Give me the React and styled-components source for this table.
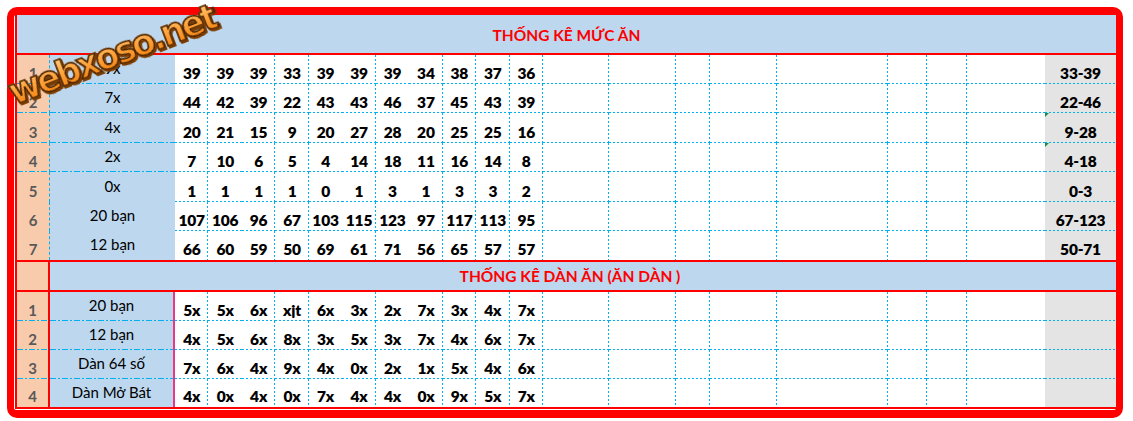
import React from "react";
import styled, { createGlobalStyle, css } from "styled-components";

const topRows = [
  { n: 1, label: "9x", values: ["39", "39", "39", "33", "39", "39", "39", "34", "38", "37", "36"], range: "33-39", sep: true },
  { n: 2, label: "7x", values: ["44", "42", "39", "22", "43", "43", "46", "37", "45", "43", "39"], range: "22-46", sep: true },
  { n: 3, label: "4x", values: ["20", "21", "15", "9", "20", "27", "28", "20", "25", "25", "16"], range: "9-28", sep: true, flag: true },
  { n: 4, label: "2x", values: ["7", "10", "6", "5", "4", "14", "18", "11", "16", "14", "8"], range: "4-18", sep: true, flag: true },
  { n: 5, label: "0x", values: ["1", "1", "1", "1", "0", "1", "3", "1", "3", "3", "2"], range: "0-3" },
  { n: 6, label: "20 bạn", values: ["107", "106", "96", "67", "103", "115", "123", "97", "117", "113", "95"], range: "67-123" },
  { n: 7, label: "12 bạn", values: ["66", "60", "59", "50", "69", "61", "71", "56", "65", "57", "57"], range: "50-71", last: true },
];

const bottomRows = [
  { n: 1, label: "20 bạn", values: ["5x", "5x", "6x", "xịt", "6x", "3x", "2x", "7x", "3x", "4x", "7x"] },
  { n: 2, label: "12 bạn", values: ["4x", "5x", "6x", "8x", "3x", "5x", "3x", "7x", "4x", "6x", "7x"] },
  { n: 3, label: "Dàn 64 số", values: ["7x", "6x", "4x", "9x", "4x", "0x", "2x", "1x", "5x", "4x", "6x"] },
  { n: 4, label: "Dàn Mở Bát", values: ["4x", "0x", "4x", "0x", "7x", "4x", "4x", "0x", "9x", "5x", "7x"], last: true },
];

// number columns without a grid line on their right edge
const noLine = [1, 4, 6];
// empty columns after the numbers; the last one has no line
const fillers = [0, 1, 2, 3, 4, 5, 6, 7];

const C = {
  red: "#ff0000",
  blue: "#bdd7ee",
  peach: "#f8cbad",
  gray: "#e4e4e4",
  dot: "#00b0f0",
  pink: "#e8388a",
};

const hDots = `repeating-linear-gradient(90deg, ${C.dot} 0 2px, transparent 2px 4px)`;
const vDots = `repeating-linear-gradient(180deg, ${C.dot} 0 2px, transparent 2px 4px)`;

// dotted grid lines drawn as backgrounds, like the sheet's hairlines
const gridLines = (p) => {
  const imgs = [];
  const sizes = [];
  const pos = [];
  if (p.$line) {
    imgs.push(vDots);
    sizes.push("1px 100%");
    pos.push("right top");
  }
  if (p.$bottom) {
    imgs.push(hDots);
    sizes.push("100% 1px");
    pos.push("left bottom");
  }
  if (!imgs.length) return "";
  return css`
    background-image: ${imgs.join(", ")};
    background-size: ${sizes.join(", ")};
    background-position: ${pos.join(", ")};
    background-repeat: no-repeat;
  `;
};

const dashDot = css`
  background-image: repeating-linear-gradient(
    90deg,
    ${C.dot} 0 6px,
    transparent 6px 8px,
    ${C.dot} 8px 10px,
    transparent 10px 12px
  );
  background-size: 100% 1px;
  background-position: left bottom;
  background-repeat: no-repeat;
`;

const GlobalStyle = createGlobalStyle`
  html, body { margin: 0; padding: 0; background: #fff; }
  body { font-family: Lato, "Liberation Sans", sans-serif; }
  * { box-sizing: border-box; }
`;

export default function App() {
  return (
    <>
      <GlobalStyle />
      <Frame>
        <Logo>webxoso.net</Logo>
        <Sheet>
          <Header>THỐNG KÊ MỨC ĂN</Header>

          {topRows.map((r) => (
            <React.Fragment key={"t" + r.n}>
              <RowNum $sep={r.sep}>{r.n}</RowNum>
              <Label $sep={r.sep}>{r.label}</Label>
              {r.values.map((v, i) => (
                <Num key={i} $line={!noLine.includes(i)} $bottom={!r.last}>{v}</Num>
              ))}
              {fillers.map((f) => (
                <Empty key={"f" + f} $line={f < 7} $bottom={!r.last} />
              ))}
              <Range $bottom={!r.last} $flag={r.flag}>{r.range}</Range>
            </React.Fragment>
          ))}

          <SubCorner />
          <SubHeader>THỐNG KÊ DÀN ĂN (ĂN DÀN )</SubHeader>

          {bottomRows.map((r) => (
            <React.Fragment key={"b" + r.n}>
              <RowNum $lower $sep={!r.last}>{r.n}</RowNum>
              <Label $lower $sep={!r.last}>{r.label}</Label>
              {r.values.map((v, i) => (
                <Num key={i} $line={!noLine.includes(i)} $bottom={!r.last}>{v}</Num>
              ))}
              {fillers.map((f) => (
                <Empty key={"f" + f} $line={f < 7} $bottom={!r.last} />
              ))}
              <Range $bottom={!r.last} />
            </React.Fragment>
          ))}
        </Sheet>
      </Frame>
    </>
  );
}

const Frame = styled.div`
  position: relative;
  margin: 7px 0 0 7px;
  width: 1116px;
  border-style: solid;
  border-color: ${C.red};
  border-width: 8px 7px 8px 7px;
  border-radius: 10px;
  padding: 0 0 1px 1px;
  background: #fff;
`;

const Sheet = styled.div`
  display: grid;
  grid-template-columns: 33px 125px repeat(11, 33.4545px) 66px 67px 34px 67px 111px 39px 40px 78px 71px;
  grid-template-rows: 40px 29px 29px 30px 29px 30px 29px 29px 32px 29px 29px 29px 28px;
  border-left: 2px solid ${C.red};
  border-bottom: 2px solid ${C.red};
  color: #000;
`;

const Header = styled.div`
  grid-column: 1 / -1;
  display: flex;
  align-items: center;
  justify-content: center;
  padding-top: 2px;
  background: ${C.blue};
  border-bottom: 2px solid ${C.red};
  color: ${C.red};
  font-weight: 700;
  font-size: 15.5px;
`;

const SubCorner = styled.div`
  background: ${C.peach};
  border-top: 2px solid ${C.red};
  border-bottom: 2px solid ${C.red};
  border-right: 2px solid ${C.red};
`;

const SubHeader = styled(Header)`
  grid-column: 2 / -1;
  border-top: 2px solid ${C.red};
  padding: 0 26px 0 0;
`;

const RowNum = styled.div`
  display: flex;
  align-items: flex-end;
  justify-content: center;
  padding-bottom: 3px;
  background-color: ${C.peach};
  color: #595959;
  font-weight: 700;
  font-size: 15px;
  line-height: 1;
  border-right: ${(p) => (p.$lower ? `2px solid ${C.red}` : `1px dashed ${C.dot}`)};
  ${(p) => p.$sep && dashDot}
`;

const Label = styled.div`
  display: flex;
  align-items: center;
  justify-content: center;
  padding-bottom: 2px;
  background-color: ${C.blue};
  font-size: 15px;
  line-height: 1;
  border-right: ${(p) => (p.$lower ? `2px solid ${C.pink}` : "none")};
  ${(p) => p.$sep && dashDot}
`;

const Num = styled.div`
  display: flex;
  align-items: flex-end;
  justify-content: center;
  padding-bottom: 3px;
  font-weight: 800;
  font-size: 15.5px;
  line-height: 1;
  white-space: nowrap;
  letter-spacing: -0.2px;
  ${gridLines}
`;

const Empty = styled.div`
  ${gridLines}
`;

const Range = styled(Num)`
  position: relative;
  background-color: ${C.gray};
  ${(p) =>
    p.$flag &&
    css`
      &::before {
        content: "";
        position: absolute;
        left: 0;
        top: 0;
        border-top: 4px solid #1e8e3e;
        border-right: 4px solid transparent;
      }
    `}
`;

const Logo = styled.div`
  position: absolute;
  left: 98px;
  top: 40px;
  z-index: 2;
  transform: translate(-50%, -50%) rotate(-21deg);
  white-space: nowrap;
  font-family: "DejaVu Sans", sans-serif;
  font-weight: 700;
  font-size: 35px;
  letter-spacing: -3px;
  line-height: 1.15;
  background: linear-gradient(180deg, #ffd58a 0%, #ffa640 45%, #f07800 100%);
  -webkit-background-clip: text;
  background-clip: text;
  color: transparent;
  -webkit-text-stroke: 1.6px #4a2300;
  filter: drop-shadow(1px 2px 0 #7a3a00);
`;
